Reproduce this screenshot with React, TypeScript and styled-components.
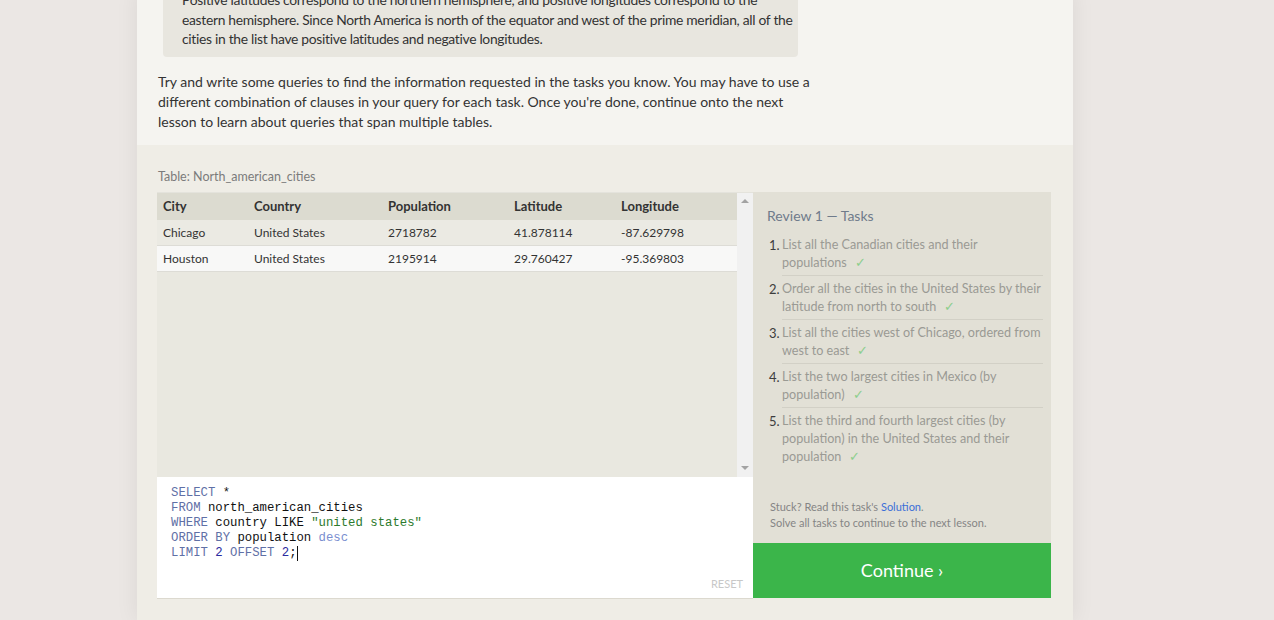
import React from "react";
import styled, { createGlobalStyle } from "styled-components";

const Global = createGlobalStyle`
  html, body { margin: 0; padding: 0; }
  body {
    background: #ebe7e4;
    font-family: Lato, "Open Sans", sans-serif;
    color: #333;
    overflow: hidden;
  }
`;

const Column = styled.div`
  width: 936px;
  margin-left: 137px;
  min-height: 620px;
  background: #efede6;
  box-shadow: 0 0 22px rgba(0, 0, 0, 0.07);
`;

const Intro = styled.section`
  background: #f5f4f0;
  padding: 0 21px 13px 21px;
`;

const Note = styled.div`
  margin: -10px 254px 0 5px;
  padding: 0 0 8px 19px;
  background: #e8e6df;
  border-radius: 0 0 4px 4px;
  font-size: 13.85px;
  letter-spacing: -0.3px;
  line-height: 19.5px;
  color: #333;
`;

const Para = styled.p`
  margin: 15px 0 0 0;
  max-width: 660px;
  font-size: 14px;
  line-height: 20px;
  color: #333;
`;

const Exercise = styled.section`
  padding: 24px 22px 22px 20px;
`;

const TableLabel = styled.div`
  font-size: 12.5px;
  line-height: 16px;
  color: #7b7b7b;
  margin-left: 1px;
  margin-bottom: 7px;
`;

const Grid = styled.div`
  display: grid;
  grid-template-columns: 596px 298px;
`;

const LeftCol = styled.div`
  display: flex;
  flex-direction: column;
  min-width: 0;
`;

const TablePanel = styled.div`
  display: flex;
  height: 284px;
  background: #e9e8e0;
  border-top: 1px solid #e4e3dc;
`;

const TableWrap = styled.div`
  flex: 1;
  min-width: 0;
  overflow: hidden;
`;

const Table = styled.table`
  width: 580px;
  border-collapse: collapse;
  table-layout: fixed;
  font-size: 12px;
  color: #333;
`;

const Th = styled.th<{ $w: number }>`
  box-sizing: border-box;
  width: ${(p) => p.$w}px;
  height: 27px;
  padding: 0 0 0 6px;
  text-align: left;
  font-size: 13px;
  font-weight: 700;
  background: #dcdbd0;
  color: #333;
`;

const Tr = styled.tr<{ $alt?: boolean }>`
  background: ${(p) => (p.$alt ? "#f8f8f7" : "#ebeae3")};
  border-bottom: 1px solid #dddcd6;
`;

const Td = styled.td`
  height: 25px;
  padding: 0 0 0 6px;
  font-size: 12px;
  white-space: nowrap;
`;

const Scrollbar = styled.div`
  width: 16px;
  flex: none;
  background: #f1f1f1;
  display: flex;
  flex-direction: column;
  justify-content: space-between;
  align-items: center;
  padding: 6px 0 7px;
  box-sizing: border-box;
`;

const Arrow = styled.div<{ $down?: boolean }>`
  width: 0;
  height: 0;
  border-left: 4px solid transparent;
  border-right: 4px solid transparent;
  ${(p) =>
    p.$down
      ? "border-top: 4px solid #a3a3a3;"
      : "border-bottom: 4px solid #a3a3a3;"}
`;

const Editor = styled.div`
  position: relative;
  height: 122px;
  box-sizing: border-box;
  background: #fff;
  border-bottom: 1px solid #dcd9cf;
  padding: 9px 14px 8px;
  font-family: "Liberation Mono", "DejaVu Sans Mono", monospace;
  font-size: 12.3px;
  line-height: 15px;
  color: #111;
  white-space: pre;
`;

const Kw = styled.span`
  color: #5f70a6;
`;
const Str = styled.span`
  color: #2c7a2c;
`;
const Num = styled.span`
  color: #2c2ca0;
`;
const Mod = styled.span`
  color: #7a8ed0;
`;
const Caret = styled.span`
  display: inline-block;
  width: 1px;
  height: 15px;
  background: #111;
  vertical-align: top;
`;

const Reset = styled.div`
  position: absolute;
  right: 10px;
  bottom: 7px;
  font-family: Lato, sans-serif;
  font-size: 11px;
  color: #c8c8c8;
`;

const RightCol = styled.div`
  display: flex;
  flex-direction: column;
`;

const TasksPanel = styled.div`
  height: 351px;
  box-sizing: border-box;
  background: #e2e0d6;
  padding: 15px 8px 0 14px;
  display: flex;
  flex-direction: column;
`;

const TasksTitle = styled.div`
  font-size: 14px;
  line-height: 18px;
  color: #6f7b8b;
  margin-bottom: 11px;
`;

const TaskList = styled.ol`
  list-style: none;
  margin: 0;
  padding: 0;
`;

const TaskItem = styled.li`
  display: flex;
  font-size: 12.6px;
  line-height: 18px;
`;

const TaskNum = styled.span`
  width: 13px;
  flex: none;
  font-size: 13px;
  color: #3d3d3d;
  padding-left: 2px;
`;

const TaskText = styled.span<{ $last?: boolean }>`
  flex: 1;
  color: #9a9a94;
  padding: 0 0 3px;
  margin-bottom: 4px;
  border-bottom: ${(p) => (p.$last ? "none" : "1px solid #d2d0c6")};
`;

const Check = styled.span`
  color: #8cce8c;
  margin-left: 8px;
`;

const Footer = styled.div`
  margin-top: auto;
  padding: 0 0 12px 3px;
  font-size: 11px;
  line-height: 16px;
  color: #858585;
`;

const Link = styled.a`
  color: #3b6fd8;
  text-decoration: none;
`;

const ContinueBtn = styled.button`
  height: 55px;
  border: none;
  background: #3bb54a;
  color: #fff;
  font-family: Lato, sans-serif;
  font-size: 18px;
  cursor: pointer;
`;

const rows = [
  ["Chicago", "United States", "2718782", "41.878114", "-87.629798"],
  ["Houston", "United States", "2195914", "29.760427", "-95.369803"],
];

const tasks = [
  "List all the Canadian cities and their populations",
  "Order all the cities in the United States by their latitude from north to south",
  "List all the cities west of Chicago, ordered from west to east",
  "List the two largest cities in Mexico (by population)",
  "List the third and fourth largest cities (by population) in the United States and their population",
];

const cols: [string, number][] = [
  ["City", 91],
  ["Country", 134],
  ["Population", 126],
  ["Latitude", 107],
  ["Longitude", 122],
];

export default function App() {
  return (
    <>
      <Global />
      <Column>
        <Intro>
          <Note>
            Positive latitudes correspond to the northern hemisphere, and positive longitudes correspond to the
            <br />
            eastern hemisphere. Since North America is north of the equator and west of the prime meridian, all of the
            <br />
            cities in the list have positive latitudes and negative longitudes.
          </Note>
          <Para>
            Try and write some queries to find the information requested in the tasks you know. You may have to use a
            different combination of clauses in your query for each task. Once you're done, continue onto the next
            lesson to learn about queries that span multiple tables.
          </Para>
        </Intro>
        <Exercise>
          <TableLabel>Table: North_american_cities</TableLabel>
          <Grid>
            <LeftCol>
              <TablePanel>
                <TableWrap>
                  <Table>
                    <thead>
                      <tr>
                        {cols.map(([c, w]) => (
                          <Th key={c} $w={w}>
                            {c}
                          </Th>
                        ))}
                      </tr>
                    </thead>
                    <tbody>
                      {rows.map((r, i) => (
                        <Tr key={r[0]} $alt={i === 1}>
                          {r.map((c, j) => (
                            <Td key={j}>{c}</Td>
                          ))}
                        </Tr>
                      ))}
                    </tbody>
                  </Table>
                </TableWrap>
                <Scrollbar>
                  <Arrow />
                  <Arrow $down />
                </Scrollbar>
              </TablePanel>
              <Editor>
                <Kw>SELECT</Kw> *{"\n"}
                <Kw>FROM</Kw> north_american_cities{"\n"}
                <Kw>WHERE</Kw> country LIKE <Str>"united states"</Str>
                {"\n"}
                <Kw>ORDER BY</Kw> population <Mod>desc</Mod>
                {"\n"}
                <Kw>LIMIT</Kw> <Num>2</Num> <Kw>OFFSET</Kw> <Num>2</Num>;<Caret />
                <Reset>RESET</Reset>
              </Editor>
            </LeftCol>
            <RightCol>
              <TasksPanel>
                <TasksTitle>Review 1 — Tasks</TasksTitle>
                <TaskList>
                  {tasks.map((t, i) => (
                    <TaskItem key={i}>
                      <TaskNum>{i + 1}.</TaskNum>
                      <TaskText $last={i === tasks.length - 1}>
                        {t}
                        <Check>✓</Check>
                      </TaskText>
                    </TaskItem>
                  ))}
                </TaskList>
                <Footer>
                  Stuck? Read this task's <Link href="#">Solution</Link>.
                  <br />
                  Solve all tasks to continue to the next lesson.
                </Footer>
              </TasksPanel>
              <ContinueBtn>Continue ›</ContinueBtn>
            </RightCol>
          </Grid>
        </Exercise>
      </Column>
    </>
  );
}
